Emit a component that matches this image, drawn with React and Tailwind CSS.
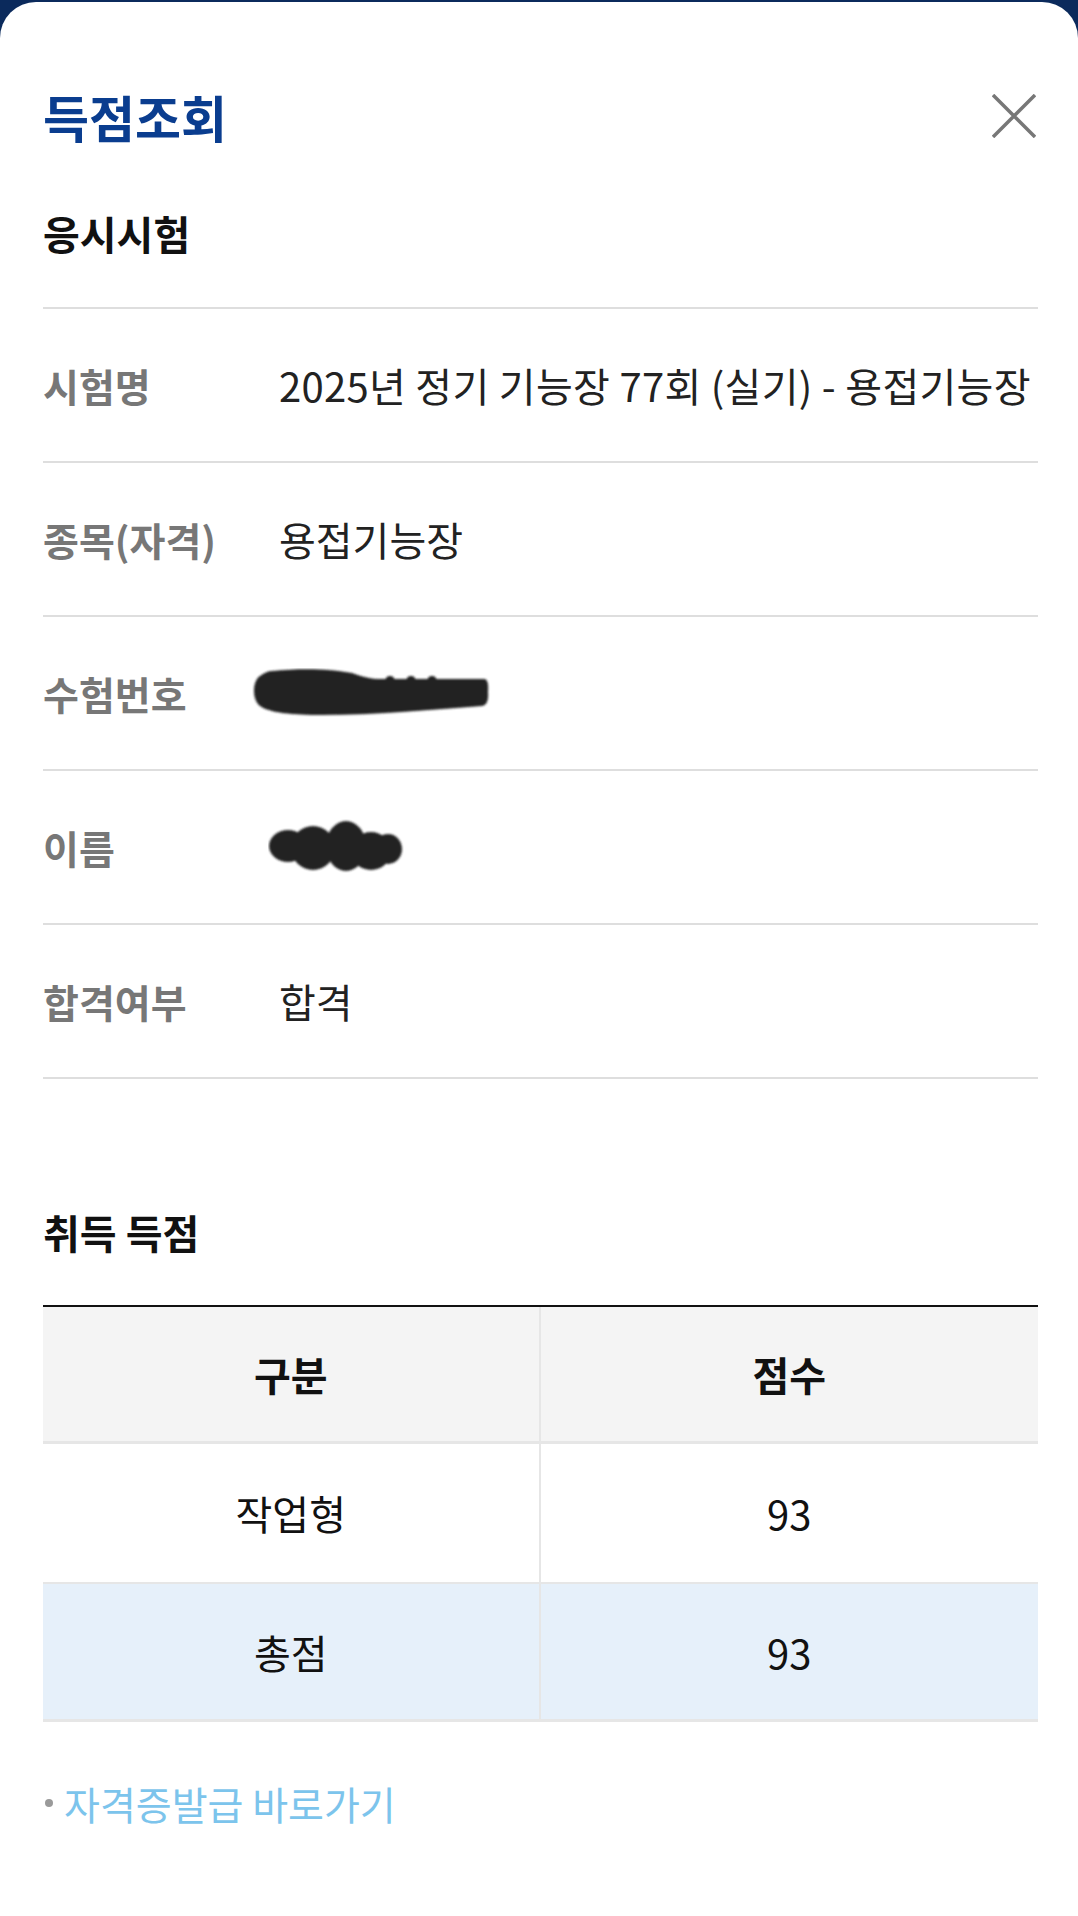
const rows = [
  { label: '시험명', value: '2025년 정기 기능장 77회 (실기) - 용접기능장', wide: true },
  { label: '종목(자격)', value: '용접기능장' },
  { label: '수험번호', blob: 'number' },
  { label: '이름', blob: 'name' },
  { label: '합격여부', value: '합격' },
];

const scores = [
  { name: '작업형', score: 93 },
  { name: '총점', score: 93, total: true },
];

const NumberBlob = () => (
  <svg width="240" height="50" viewBox="0 0 240 50" className="ml-[-27px]">
    <defs>
      <filter id="soft1">
        <feGaussianBlur stdDeviation="0.9" />
      </filter>
    </defs>
    <g fill="#242424" filter="url(#soft1)">
      <path d="M20 3 C50 0 80 1 100 5 C112 9 118 11 130 11 L232 11 Q237 11 236 24 Q237 37 230 38 C180 42 120 47 70 47 C40 47 18 45 8 38 C0 32 0 13 8 8 C12 5 16 3 20 3 Z" />
      <circle cx="138" cy="13" r="5" />
      <circle cx="159" cy="13" r="5" />
      <circle cx="180" cy="13" r="5" />
    </g>
  </svg>
);

const NameBlob = () => (
  <svg width="136" height="56" viewBox="0 0 136 56" className="ml-[-11px]">
    <defs>
      <filter id="soft2">
        <feGaussianBlur stdDeviation="0.9" />
      </filter>
    </defs>
    <g fill="#242424" filter="url(#soft2)">
      <ellipse cx="20" cy="27" rx="19" ry="16" />
      <ellipse cx="45" cy="29" rx="22" ry="22" />
      <ellipse cx="78" cy="27" rx="20" ry="25" />
      <ellipse cx="103" cy="32" rx="20" ry="19" />
      <ellipse cx="120" cy="30" rx="14" ry="15" />
    </g>
  </svg>
);

export default function App() {
  return (
    <div className="min-h-[1916px] bg-[#0b2a5c] pt-[2px] font-['Noto_Sans_CJK_KR','Noto_Sans',sans-serif]">
      <div className="min-h-[1914px] rounded-t-[36px] bg-white pl-[43px] pr-[40px]">
        {/* header */}
        <div className="box-content flex h-[60px] items-center justify-between pt-[84px]">
          <h1 className="text-[50px] font-bold leading-none text-[#0a3d8f]">득점조회</h1>
          <button className="mr-[2px] flex h-[44px] w-[44px] items-center justify-center">
            <svg width="44" height="44" viewBox="0 0 44 44">
              <path d="M1 1 L43 43 M43 1 L1 43" stroke="#777" strokeWidth="3.5" fill="none" />
            </svg>
          </button>
        </div>

        <h2 className="mt-[62px] flex h-[50px] items-center text-[40px] font-bold leading-none text-[#111]">응시시험</h2>

        <div className="mt-[49px] border-b-2 border-[#dedede]">
          {rows.map((row) => (
            <div key={row.label} className="flex h-[154px] items-center border-t-2 border-[#dedede]">
              <span className="w-[236px] shrink-0 text-[39px] font-bold leading-none text-[#777]">{row.label}</span>
              {row.blob === 'number' ? (
                <NumberBlob />
              ) : row.blob === 'name' ? (
                <NameBlob />
              ) : (
                <span className={row.wide ? 'whitespace-nowrap text-[40px] leading-none tracking-[0.3px] text-[#222]' : 'whitespace-nowrap text-[40px] leading-none text-[#222]'}>
                  {row.value}
                </span>
              )}
            </div>
          ))}
        </div>

        <h2 className="mt-[128px] flex h-[50px] items-center text-[40px] font-bold leading-none text-[#111]">취득 득점</h2>

        <div className="mt-[48px] border-t-2 border-[#111]">
          <div className="grid h-[137px] grid-cols-2 border-b-[3px] border-[#e6e6e6] bg-[#f4f4f4]">
            <div className="flex items-center justify-center border-r-2 border-[#e6e6e6] text-[40px] font-bold text-[#111]">구분</div>
            <div className="flex items-center justify-center text-[40px] font-bold text-[#111]">점수</div>
          </div>
          {scores.map((s) => (
            <div
              key={s.name}
              className={
                s.total
                  ? 'grid h-[138px] grid-cols-2 border-b-[3px] border-[#e6e6e6] bg-[#e6f0fa]'
                  : 'grid h-[140px] grid-cols-2 border-b-2 border-[#e6e6e6] bg-white'
              }
            >
              <div className="flex items-center justify-center border-r-2 border-[#e6e6e6] text-[40px] text-[#111]">{s.name}</div>
              <div className="flex items-center justify-center text-[40px] text-[#111]">{s.score}</div>
            </div>
          ))}
        </div>

        <a href="#" className="mt-[56px] flex h-[50px] items-center">
          <span className="ml-[2px] mr-[11px] h-[8px] w-[8px] rounded-full bg-[#9a9a9a]" />
          <span className="text-[39px] leading-none text-[#7cc4ec]">자격증발급 바로가기</span>
        </a>
      </div>
    </div>
  );
}
